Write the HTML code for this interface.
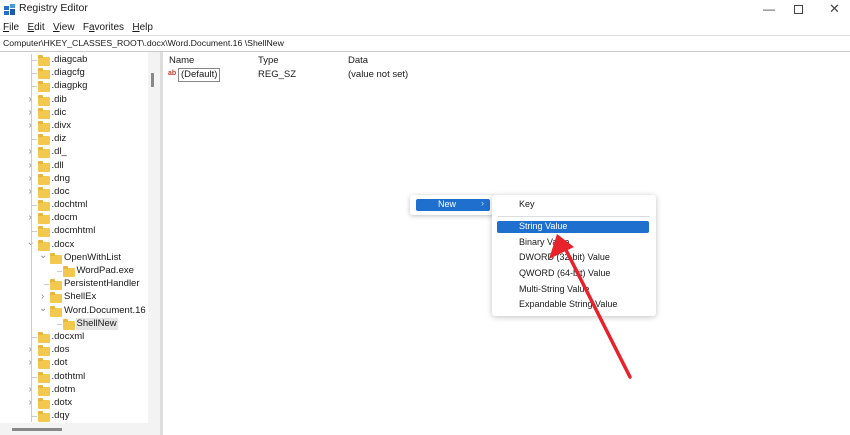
<!DOCTYPE html>
<html><head><style>
body{margin:0;width:850px;height:435px;overflow:hidden;background:#fff;font-family:"Liberation Sans",sans-serif;font-size:9.5px;color:#1a1a1a;position:relative}
.a{position:absolute;white-space:nowrap}
.f{position:absolute;width:12px;height:9px;background:#f3c84f;border-radius:1px}
.f:before{content:"";position:absolute;left:0;top:-2px;width:5px;height:3px;background:#e8b73a;border-radius:1px 1px 0 0}
.ar{position:absolute;font-size:10px;color:#888}
.ln{position:absolute;background:#ccc}
</style></head><body>
<div class="a" style="left:4px;top:4px;width:12px;height:11px">
<div style="position:absolute;left:0;top:2px;width:5px;height:4px;background:#2a6fc6"></div>
<div style="position:absolute;left:6px;top:0;width:5px;height:4px;background:#4a9ae0"></div>
<div style="position:absolute;left:0;top:7px;width:5px;height:4px;background:#2a6fc6"></div>
<div style="position:absolute;left:6px;top:5px;width:5px;height:6px;background:#1c5aa8"></div></div>
<div class="a" style="left:19px;top:2px;font-size:10.5px">Registry Editor</div>
<div class="a" style="left:763px;top:2px;font-size:12px;color:#444">—</div>
<div class="a" style="left:794px;top:5px;width:7px;height:7px;border:1px solid #444"></div>
<div class="a" style="left:829px;top:1px;font-size:13px;color:#444">✕</div>
<div class="a" style="left:3px;top:22px;font-size:10px"><u>F</u>ile&nbsp;&nbsp;&nbsp;<u>E</u>dit&nbsp;&nbsp;&nbsp;<u>V</u>iew&nbsp;&nbsp;&nbsp;F<u>a</u>vorites&nbsp;&nbsp;&nbsp;<u>H</u>elp</div>
<div class="a" style="left:0;top:35px;width:850px;height:1px;background:#ddd"></div>
<div class="a" style="left:3px;top:38px;font-size:8.7px">Computer\HKEY_CLASSES_ROOT\.docx\Word.Document.16 \ShellNew</div>
<div class="a" style="left:0;top:51px;width:850px;height:1px;background:#ccc"></div>
<div class="a" style="left:148px;top:52px;width:12px;height:383px;background:#f3f3f3"></div>
<div class="a" style="left:151px;top:73px;width:3px;height:14px;background:#888"></div>
<div class="a" style="left:160px;top:52px;width:3px;height:383px;background:#ddd"></div>
<div class="a" style="left:0;top:423px;width:160px;height:12px;background:#f3f3f3"></div>
<div class="a" style="left:12px;top:428px;width:50px;height:3px;background:#888"></div>
<div class="a" style="left:169px;top:55px">Name</div>
<div class="a" style="left:258px;top:55px">Type</div>
<div class="a" style="left:348px;top:55px">Data</div>
<div class="a" style="left:168px;top:70px;font-size:7px;color:#c0392b;font-weight:bold">ab</div>
<div class="a" style="left:178px;top:68px;border:1px solid #888;padding:0 2px;height:12px;line-height:12px">(Default)</div>
<div class="a" style="left:258px;top:69px">REG_SZ</div>
<div class="a" style="left:348px;top:69px">(value not set)</div>
<div id="tree"></div>
<div class="a" style="left:410px;top:195px;width:84px;height:20px;background:#fff;box-shadow:0 1px 5px rgba(0,0,0,.25);border-radius:3px"></div>
<div class="a" style="left:416px;top:199px;width:74px;height:12px;background:#1f6fce;border-radius:2px"></div>
<div class="a" style="left:438px;top:199px;color:#fff;font-size:9px">New</div>
<div class="a" style="left:481px;top:198px;color:#cde;font-size:9px">›</div>
<div class="a" style="left:492px;top:195px;width:164px;height:121px;background:#fff;box-shadow:0 1px 6px rgba(0,0,0,.25);border-radius:3px"></div>
<div class="a" style="left:498px;top:216px;width:152px;height:1px;background:#ddd"></div>
<div class="a" style="left:497px;top:221px;width:152px;height:12px;background:#1f6fce;border-radius:2px"></div>
<div class="a" style="left:519px;top:199px;font-size:9px">Key</div>
<div class="a" style="left:519px;top:221px;font-size:9px;color:#fff">String Value</div>
<div class="a" style="left:519px;top:237px;font-size:9px">Binary Value</div>
<div class="a" style="left:519px;top:252px;font-size:9px">DWORD (32-bit) Value</div>
<div class="a" style="left:519px;top:268px;font-size:9px">QWORD (64-bit) Value</div>
<div class="a" style="left:519px;top:284px;font-size:9px">Multi-String Value</div>
<div class="a" style="left:519px;top:299px;font-size:9px">Expandable String Value</div>
<svg class="a" style="left:0;top:0" width="850" height="435"><line x1="630" y1="377" x2="566" y2="250" stroke="#e8222a" stroke-width="3.5" stroke-linecap="round"/><polygon points="557,234 549,259 574,247" fill="#e8222a"/></svg>
<script>
var rows=[
[1,".diagcab",0],[1,".diagcfg",0],[1,".diagpkg",0],[1,".dib",1],[1,".dic",1],[1,".divx",1],[1,".diz",0],[1,".dl_",1],[1,".dll",1],[1,".dng",1],[1,".doc",1],[1,".dochtml",0],[1,".docm",1],[1,".docmhtml",0],[1,".docx",2],[2,"OpenWithList",2],[3,"WordPad.exe",0],[2,"PersistentHandler",0],[2,"ShellEx",1],[2,"Word.Document.16",2],[3,"ShellNew",0],[1,".docxml",0],[1,".dos",1],[1,".dot",1],[1,".dothtml",0],[1,".dotm",1],[1,".dotx",1],[1,".dqy",0]];
var h="";
for(var i=0;i<rows.length;i++){var r=rows[i],y=54+i*13.19,fx=25+r[0]*12.5;
if(r[2]==1)h+='<div class="ar" style="left:'+(fx-9)+'px;top:'+(y)+'px">›</div>';
else if(r[2]==2)h+='<div class="ar" style="left:'+(fx-11)+'px;top:'+(y-2)+'px">⌄</div>';
else h+='<div class="ln" style="left:'+(fx-6)+'px;top:'+(y+6)+'px;width:5px;height:1px"></div>';
h+='<div class="f" style="left:'+fx+'px;top:'+(y+3)+'px"></div>';
if(r[1]=="ShellNew")h+='<div class="a" style="left:'+(fx+13)+'px;top:'+(y)+'px;width:42px;height:12px;background:#e5e5e5"></div>';
h+='<div class="a" style="left:'+(fx+14)+'px;top:'+y+'px">'+r[1]+'</div>';}
h+='<div class="ln" style="left:31px;top:54px;width:1px;height:368px"></div>';
document.getElementById("tree").innerHTML=h;
</script>
</body></html>
